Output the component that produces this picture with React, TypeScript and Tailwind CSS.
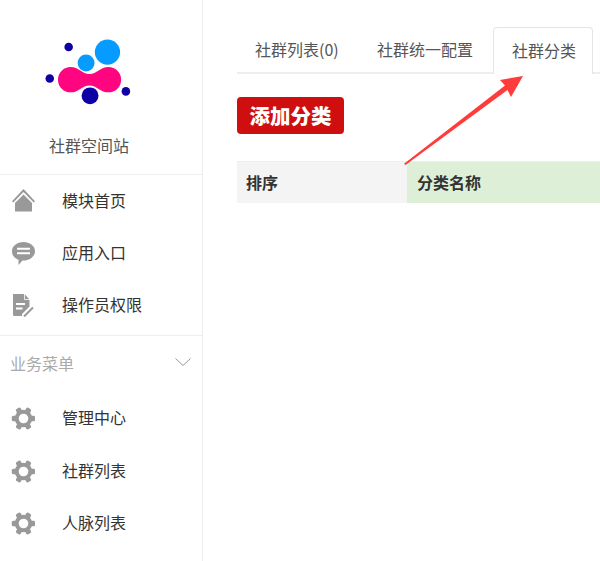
const FONT = "font-['Noto_Sans_CJK_SC','Microsoft_YaHei',sans-serif]";

function Logo() {
  return (
    <svg className="w-[203px] h-[133px]" viewBox="0 0 203 133" aria-hidden="true">
      <circle cx="108" cy="52" r="12.700" fill="#069cff" />
      <circle cx="86.500" cy="63" r="8.500" fill="#069cff" />
      <path
        d="M71 67C79.300 67 82.300 74 90 74C97.300 74 100.800 67 109 67A12.700 12.700 0 0 1 109 92.500C100.800 92.500 97.300 85.500 90 85.500C82.300 85.500 79.300 92.500 71 92.500A12.700 12.700 0 0 1 71 67Z"
        fill="#ff0580"
      />
      <circle cx="90.500" cy="96" r="8.500" fill="#0e00a4" />
      <circle cx="69" cy="47" r="4.300" fill="#0e00a4" />
      <circle cx="50" cy="78.500" r="4.300" fill="#0e00a4" />
      <circle cx="126.500" cy="91.500" r="4.300" fill="#0e00a4" />
    </svg>
  );
}

function HomeIcon() {
  return (
    <svg className="w-6 h-6" viewBox="0 0 24 24" fill="#999" aria-hidden="true">
      <path d="M12.500 0L1 12.200 2.300 13.500 12.500 3 22.700 13.500 24 12.200z" />
      <path d="M12.500 5.500L4 14V22.500H21V14z" />
    </svg>
  );
}

function ChatIcon() {
  return (
    <svg className="w-6 h-6" viewBox="0 0 24 24" aria-hidden="true">
      <path
        d="M12.500 1C18.800 1 24 5 24 10.200S18.800 19.500 12.500 19.500H11.500L7.500 24V18.800C3.500 17.500 1 14.200 1 10.200 1 5 6.200 1 12.500 1Z"
        fill="#999"
      />
      <path d="M6 7.700h13M6 12.200h13" stroke="#fff" strokeWidth="2" />
    </svg>
  );
}

function FileIcon() {
  return (
    <svg className="w-6 h-6" viewBox="0 0 24 24" aria-hidden="true">
      <path d="M2 1h11.500l5 5.500V13.500L11 21V23H3.500A1.500 1.500 0 0 1 2 21.500Z" fill="#999" />
      <path d="M13.500 .500V6.500H19" fill="none" stroke="#fff" strokeWidth="0.800" />
      <path d="M5 11h9M5 15.500h6.500" stroke="#fff" strokeWidth="1.800" />
      <path d="M13 23.500L22 14.500" stroke="#999" strokeWidth="2" />
    </svg>
  );
}

function GearIcon() {
  return (
    <svg className="w-6 h-6" viewBox="0 0 24 24" aria-hidden="true">
      <circle cx="12.500" cy="12.500" r="8.700" fill="#999" />
      <rect x="0.800" y="9.800" width="23.400" height="5.400" rx="1.500" fill="#999" />
      <rect x="0.800" y="9.800" width="23.400" height="5.400" rx="1.500" fill="#999" transform="rotate(60 12.500 12.500)" />
      <rect x="0.800" y="9.800" width="23.400" height="5.400" rx="1.500" fill="#999" transform="rotate(120 12.500 12.500)" />
      <circle cx="12.500" cy="12.500" r="4.800" fill="#fff" />
    </svg>
  );
}

function NavRow({ icon, label, className = 'h-[52px]' }: { icon: React.ReactNode; label: string; className?: string }) {
  return (
    <div className={`flex items-center pl-[11px] ${className}`}>
      <span className="w-[51px] shrink-0 flex">{icon}</span>
      <span className="text-base leading-6 text-[#333] mb-[2px]">{label}</span>
    </div>
  );
}

export default function App() {
  return (
    <div className={`relative flex w-[600px] h-[561px] overflow-hidden bg-white ${FONT}`}>
      <aside className="w-[203px] shrink-0 border-r border-[#eeeeee] flex flex-col">
        <div className="h-[175px] shrink-0 border-b border-[#eeeeee] flex flex-col">
          <div className="h-[133px] w-full shrink-0 flex">
            <Logo />
          </div>
          <span className="pl-[49px] text-base leading-6 text-[#555]">社群空间站</span>
        </div>
        <NavRow icon={<HomeIcon />} label="模块首页" />
        <NavRow icon={<ChatIcon />} label="应用入口" />
        <NavRow icon={<FileIcon />} label="操作员权限" />
        <div className="mt-1 border-t border-[#eeeeee] h-[57px] shrink-0 flex items-start justify-between pl-[10px] pr-[11px] pt-[15px]">
          <span className="text-base leading-6 text-[#aaa]">业务菜单</span>
          <svg className="w-4 h-2 mt-[7px]" viewBox="0 0 16 8" fill="none" stroke="#999" aria-hidden="true">
            <path d="M.5.500L8 7.500 15.500.500" />
          </svg>
        </div>
        <NavRow icon={<GearIcon />} label="管理中心" />
        <NavRow icon={<GearIcon />} label="社群列表" className="h-[53px]" />
        <NavRow icon={<GearIcon />} label="人脉列表" />
      </aside>

      <main className="flex-1 pl-[34px] pt-[27px] min-w-0">
        <div className="flex h-[47px] border-b-2 border-[#eeeeee] text-base leading-6 text-[#555]">
          <div className="w-[118px] pl-[18px] pt-[10px] whitespace-nowrap">社群列表(0)</div>
          <div className="w-[138px] pl-[22px] pt-[10px] whitespace-nowrap">社群统一配置</div>
          <div className="w-[100px] h-[47px] pl-[18px] pt-[10px] border border-b-0 border-[#e4e4e4] rounded-t-[4px] bg-white whitespace-nowrap">
            社群分类
          </div>
        </div>
        <button className="mt-[23px] flex items-center justify-center w-[107px] h-[37px] rounded-[4px] bg-[#cf0f0f] text-white text-[20.500px] font-black">
          添加分类
        </button>
        <div className="mt-[27px] flex h-[42px] border-t border-[#eeeeee] text-base font-bold text-[#333]">
          <div className="w-[170px] pl-[9px] pb-[2px] flex items-center bg-[#f4f4f4]">排序</div>
          <div className="flex-1 pl-[10px] pb-[2px] flex items-center bg-[#deefd8]">分类名称</div>
        </div>
      </main>

      <svg className="absolute left-0 top-0 w-[600px] h-[561px] pointer-events-none" viewBox="0 0 600 561" aria-hidden="true">
        <polygon points="404,163.800 505,85.500 500,80 523,76 511,97 507.500,90 405.500,165" fill="#ff3b3b" />
      </svg>
    </div>
  );
}
